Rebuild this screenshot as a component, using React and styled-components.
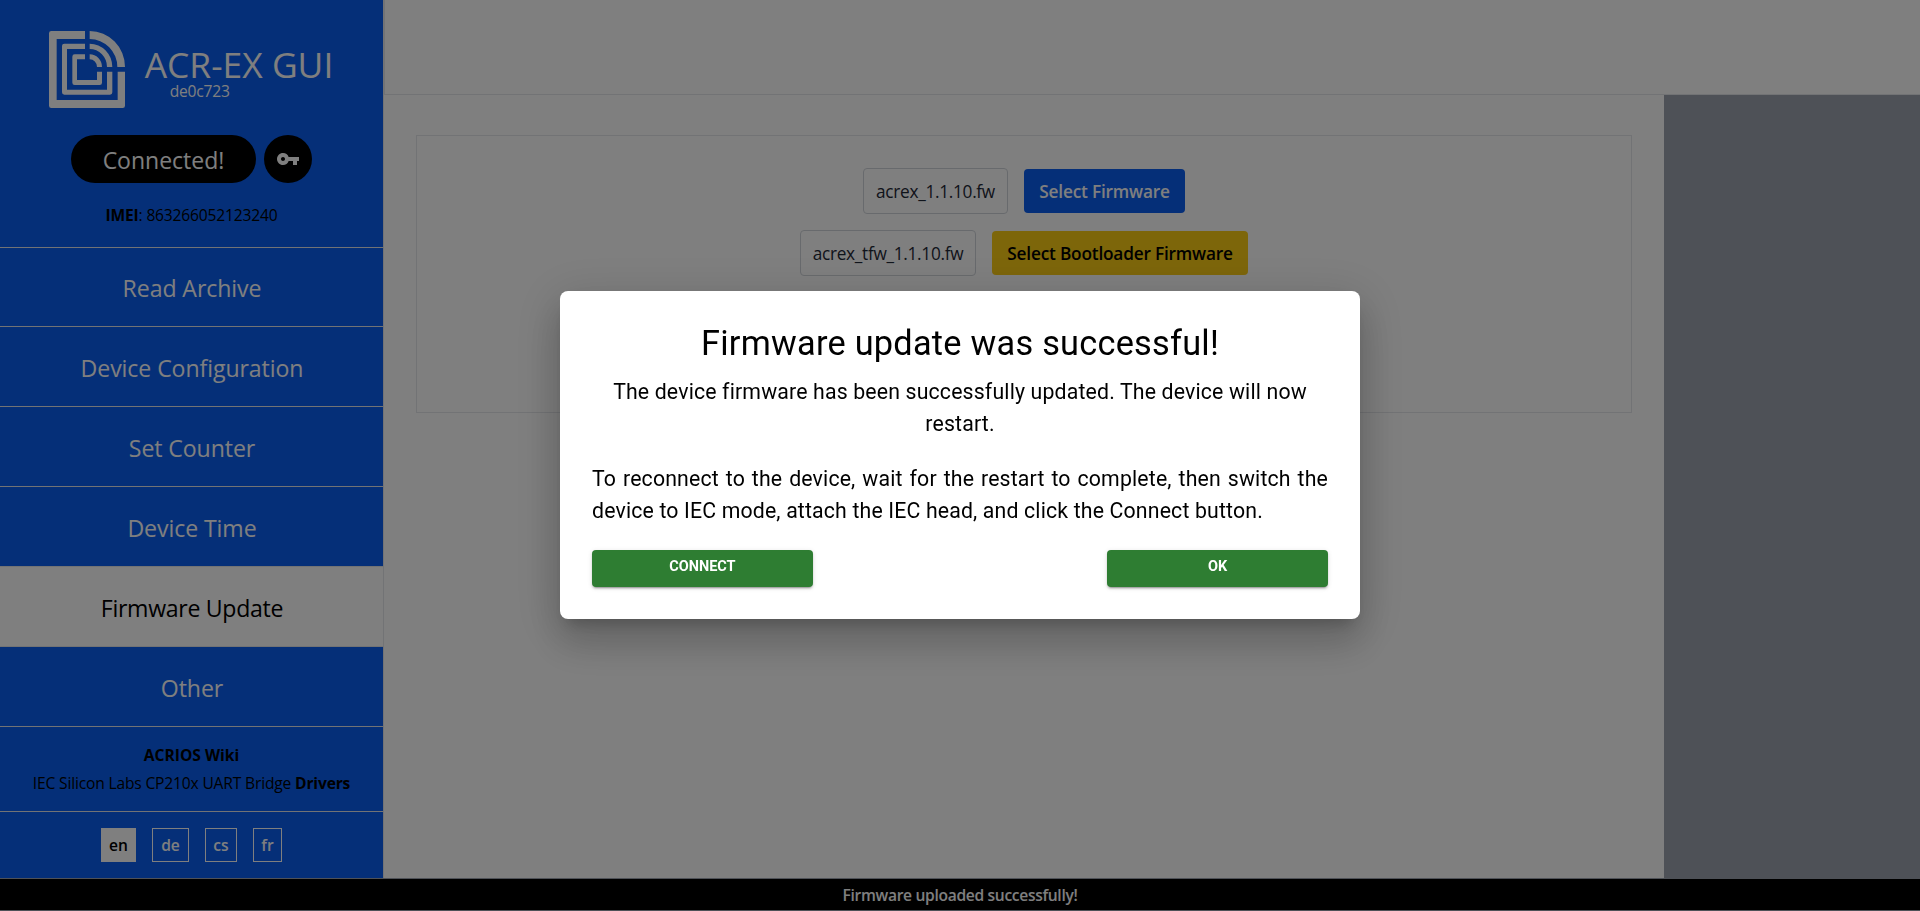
import React from "react"
import styled, { createGlobalStyle } from "styled-components"
import { MdVpnKey } from "react-icons/md"

const GlobalStyle = createGlobalStyle`
  *, *::before, *::after {
    box-sizing: border-box;
  }

  body {
    margin: 0;
    overflow: hidden;
    background: #fff;
    color: #000;
    font-family: "Open Sans", "Noto Sans", sans-serif;
    font-size: 15.6px;
    line-height: 24px;
  }

  h1, h2, p {
    margin: 0;
    font-weight: 400;
  }
`

const Page = styled.div`
  display: grid;
  grid-template-columns: 384px 1fr;
  grid-template-rows: 878px 33px;
  width: 100vw;
  height: 911px;
`

const Sidebar = styled.aside`
  display: flex;
  flex-direction: column;
  background: #0a5ef0;
  border-right: 1px solid #e5e7eb;
`

const Brand = styled.div`
  display: flex;
  justify-content: center;
  gap: 20px;
  height: 135px;
  padding: 31px 1px 0 0;
  color: #fff;
`

const BrandText = styled.div`
  padding-top: 15px;
`

const AppName = styled.h1`
  font-size: 35.4px;
  line-height: 36px;
  white-space: nowrap;
`

const Version = styled.p`
  padding-left: 25px;
  line-height: 19px;
  letter-spacing: -0.2px;
`

const Status = styled.div`
  display: flex;
  justify-content: center;
  gap: 8px;
`

const StatusPill = styled.button`
  width: 185px;
  height: 48px;
  padding: 1px 0 0;
  border: 0;
  border-radius: 24px;
  background: #000;
  color: #fff;
  font-family: inherit;
  font-size: 23px;
`

const KeyButton = styled.button`
  display: grid;
  place-items: center;
  width: 48px;
  height: 48px;
  padding: 0;
  border: 0;
  border-radius: 50%;
  background: #000;
  color: #fff;
`

const Imei = styled.p`
  height: 65px;
  padding-top: 20px;
  border-bottom: 1px solid #e5e7eb;
  letter-spacing: -0.18px;
  text-align: center;
`

const Nav = styled.nav`
  display: grid;
  grid-template-rows: 79px repeat(5, 80px);
`

const NavItem = styled.a`
  display: flex;
  align-items: center;
  justify-content: center;
  padding: 2px 0 0 1px;
  border-bottom: 1px solid #e5e7eb;
  background: ${({ $active }) => ($active ? "#fff" : "transparent")};
  color: ${({ $active }) => ($active ? "#000" : "#fff")};
  font-size: 23.1px;
  letter-spacing: ${({ $spacing = -0.08 }) => $spacing}px;
`

const Links = styled.div`
  height: 85px;
  padding-top: 14px;
  border-bottom: 1px solid #e5e7eb;
  text-align: center;
  line-height: 28px;
`

const LinkLine = styled.p`
  letter-spacing: ${({ $spacing = 0 }) => $spacing}px;
  white-space: nowrap;
`

const Languages = styled.div`
  display: flex;
  justify-content: center;
  gap: 16px;
  padding-top: 16px;
`

const Language = styled.button`
  width: ${({ $width }) => $width}px;
  height: 34px;
  padding: 0;
  border: 1px solid #fff;
  background: ${({ $active }) => ($active ? "#fff" : "transparent")};
  color: ${({ $active }) => ($active ? "#000" : "#fff")};
  font-family: inherit;
  font-size: 15.6px;
  font-weight: 600;
`

const Main = styled.main`
  display: grid;
  grid-template-columns: 1280px 1fr;
  grid-template-rows: 95px 1fr;
`

const TopBar = styled.header`
  grid-column: 1 / -1;
  border-left: 1px solid #e5e7eb;
  border-bottom: 1px solid #e5e7eb;
`

const Content = styled.section`
  padding: 40px 32px;
`

const Aside = styled.aside`
  background: #9ca3af;
`

const UploadPanel = styled.div`
  display: flex;
  flex-direction: column;
  gap: 16px;
  height: 278px;
  padding-top: 32px;
  border: 1px solid #e5e7eb;
`

const UploadRow = styled.div`
  display: flex;
  align-items: center;
  justify-content: center;
  gap: 16px;
  font-size: 17.25px;
`

const FileName = styled.span`
  width: ${({ $width }) => $width}px;
  height: 46px;
  border: 1px solid #d1d5db;
  border-radius: 4px;
  color: #1f2937;
  line-height: 45px;
  letter-spacing: -0.3px;
  text-align: center;
`

const SelectButton = styled.button`
  width: ${({ $width }) => $width}px;
  height: 44px;
  padding: 0;
  border: 0;
  border-radius: 4px;
  background: ${({ $warning }) => ($warning ? "#facc15" : "#0a5ef0")};
  color: ${({ $warning }) => ($warning ? "#000" : "#fff")};
  font-family: inherit;
  font-size: 17.25px;
  font-weight: 600;
  letter-spacing: -0.2px;
`

const StatusBar = styled.footer`
  grid-column: 1 / -1;
  border-top: 1px solid #9ca3af;
  border-bottom: 1px solid #9ca3af;
  background: #000;
  color: #fff;
  font-weight: 600;
  line-height: 32px;
  letter-spacing: -0.32px;
  text-align: center;
`

const Backdrop = styled.div`
  position: fixed;
  inset: 0;
  display: flex;
  align-items: center;
  justify-content: center;
  padding-bottom: 2px;
  background: rgba(0, 0, 0, 0.5);
`

const Dialog = styled.div`
  width: 800px;
  height: 328px;
  padding: 31px 32px;
  border-radius: 8px;
  background: #fff;
  box-shadow: 0 11px 15px -7px rgba(0, 0, 0, 0.2), 0 24px 38px 3px rgba(0, 0, 0, 0.14),
    0 9px 46px 8px rgba(0, 0, 0, 0.12);
  font-family: Roboto, sans-serif;
`

const DialogTitle = styled.h2`
  margin-bottom: 12px;
  font-size: 34.3px;
  line-height: 42px;
  letter-spacing: 0.00735em;
  text-align: center;
`

const DialogText = styled.p`
  margin-bottom: 23.3px;
  font-size: 21.28px;
  line-height: 32px;
  letter-spacing: 0.0075em;
  text-align: ${({ $align }) => $align};
`

const DialogActions = styled.div`
  display: flex;
  justify-content: space-between;
`

const ActionButton = styled.button`
  width: 30%;
  height: 36.5px;
  padding: 0 0 3px;
  border: 0;
  border-radius: 4px;
  background: #2e7d32;
  color: #fff;
  box-shadow: 0 3px 1px -2px rgba(0, 0, 0, 0.2), 0 2px 2px 0 rgba(0, 0, 0, 0.14),
    0 1px 5px 0 rgba(0, 0, 0, 0.12);
  font-family: inherit;
  font-size: 14.5px;
  font-weight: 700;
  text-transform: uppercase;
`

const Logo = () => (
  <svg width="76" height="77" viewBox="27 33 228 231" fill="currentColor">
    <path d="M135 33H34a7 7 0 0 0-7 7V257a7 7 0 0 0 7 7H248a7 7 0 0 0 7-7V155H233V240H50V57H135Z" />
    <path d="M149 33A106 108 0 0 1 255 141H232A83 84 0 0 0 149 57Z" />
    <path d="M135 71H73a7 7 0 0 0-7 7V217a7 7 0 0 0 7 7H210a7 7 0 0 0 7-7V155H201V209H81V87H135Z" />
    <path d="M149 71A68 70 0 0 1 217 141H201A52 54 0 0 0 149 87Z" />
    <path d="M135 103H104a7 7 0 0 0-7 7V188a7 7 0 0 0 7 7H179a7 7 0 0 0 7-7V155H171V180H111V118H135Z" />
    <path d="M149 103A37 38 0 0 1 186 141H171A22 23 0 0 0 149 118Z" />
  </svg>
)

const navItems = [
  { label: "Read Archive" },
  { label: "Device Configuration" },
  { label: "Set Counter" },
  { label: "Device Time" },
  { label: "Firmware Update", spacing: -0.3, active: true },
  { label: "Other" },
]

const languages = [
  { code: "en", width: 35, active: true },
  { code: "de", width: 37 },
  { code: "cs", width: 32 },
  { code: "fr", width: 29 },
]

const SidebarMenu = () => (
  <Sidebar>
    <Brand>
      <Logo />
      <BrandText>
        <AppName>ACR-EX GUI</AppName>
        <Version>de0c723</Version>
      </BrandText>
    </Brand>
    <Status>
      <StatusPill>Connected!</StatusPill>
      <KeyButton>
        <MdVpnKey size={24} />
      </KeyButton>
    </Status>
    <Imei>
      <b>IMEI</b>: 863266052123240
    </Imei>
    <Nav>
      {navItems.map(({ label, spacing, active }) => (
        <NavItem key={label} $spacing={spacing} $active={active}>{label}</NavItem>
      ))}
    </Nav>
    <Links>
      <LinkLine><b>ACRIOS Wiki</b></LinkLine>
      <LinkLine $spacing={-0.17}>
        IEC Silicon Labs CP210x UART Bridge <b>Drivers</b>
      </LinkLine>
    </Links>
    <Languages>
      {languages.map(({ code, width, active }) => (
        <Language key={code} $width={width} $active={active}>{code}</Language>
      ))}
    </Languages>
  </Sidebar>
)

const SuccessDialog = () => (
  <Backdrop>
    <Dialog>
      <DialogTitle>Firmware update was successful!</DialogTitle>
      <DialogText $align="center">
        The device firmware has been successfully updated. The device will now restart.
      </DialogText>
      <DialogText $align="justify">
        To reconnect to the device, wait for the restart to complete, then switch the device to
        IEC mode, attach the IEC head, and click the Connect button.
      </DialogText>
      <DialogActions>
        <ActionButton>Connect</ActionButton>
        <ActionButton>Ok</ActionButton>
      </DialogActions>
    </Dialog>
  </Backdrop>
)

const App = () => {
  return (
    <>
      <GlobalStyle />
      <Page>
        <SidebarMenu />
        <Main>
          <TopBar />
          <Content>
            <UploadPanel>
              <UploadRow>
                <FileName $width={145}>acrex_1.1.10.fw</FileName>
                <SelectButton $width={161}>Select Firmware</SelectButton>
              </UploadRow>
              <UploadRow>
                <FileName $width={176}>acrex_tfw_1.1.10.fw</FileName>
                <SelectButton $width={256} $warning>Select Bootloader Firmware</SelectButton>
              </UploadRow>
            </UploadPanel>
          </Content>
          <Aside />
        </Main>
        <StatusBar>Firmware uploaded successfully!</StatusBar>
      </Page>
      <SuccessDialog />
    </>
  )
}

export default App
